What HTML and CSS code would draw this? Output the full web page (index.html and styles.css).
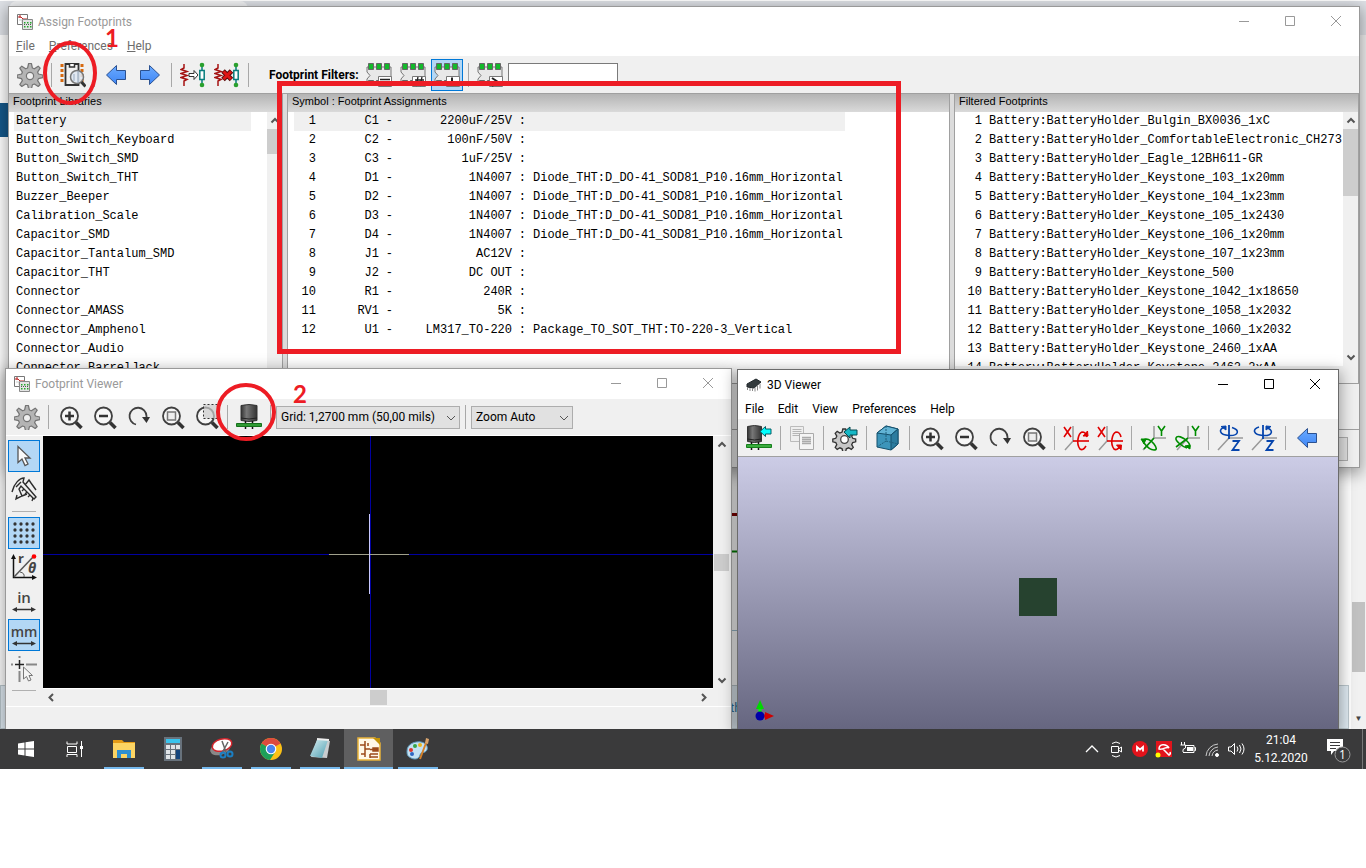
FILE: index.html
```
<!DOCTYPE html>
<html lang="en">
  <head>
    <meta charset="UTF-8" />
    <meta name="viewport" content="width=device-width, initial-scale=1.0" />
    <title>Assign Footprints</title>
    <link rel="stylesheet" href="styles.css">
  </head>
  <body>
    <svg class="sprite" aria-hidden="true">
      <defs>
        <linearGradient id="blueArrow" x1="0" y1="0" x2="0" y2="1">
          <stop offset="0" stop-color="#6aaaff" /><stop offset="1" stop-color="#3f86f5" />
        </linearGradient>
        <linearGradient id="can" x1="0" y1="0" x2="1" y2="0">
          <stop offset="0" stop-color="#333" /><stop offset="0.35" stop-color="#777" /><stop offset="1" stop-color="#333" />
        </linearGradient>
        <linearGradient id="pad" x1="0" y1="0" x2="1" y2="1">
          <stop offset="0" stop-color="#d7eef2" /><stop offset="1" stop-color="#4c9db0" />
        </linearGradient>
      </defs>
      <symbol id="app" viewBox="0 0 16 16">
        <path d="M0.5 0.5h10v10h-10z" fill="#fff" stroke="#777" />
        <path d="M1 3h3l2 2h4M3 1v3" stroke="#b22" fill="none" />
        <path d="M2 6h3v3" stroke="#ccc" fill="none" />
        <path d="M5.500 5.500h10v10h-10z" fill="#e4e4e4" stroke="#888" />
        <path d="M7 8h1.500v1.500H7zM10 8h1.500v1.500H10zM13 8h1.500v1.500H13zM7 12h1.500v1.500H7zM10 12h1.500v1.500H10zM13 12h1.500v1.500H13z" fill="#26a52c" />
        <path d="M7 10.500h7" stroke="#555" stroke-dasharray="1 1" />
      </symbol>
      <symbol id="chip3d" viewBox="0 0 16 16">
        <path d="M1 7l9-5 5 3-7 6-7-1z" fill="#333a3d" stroke="#20272a" />
        <path d="M1.500 10v3M4 11v3M6.500 11v3M9 10.500v4M11.500 8.500v5M14 6.500v5" stroke="#888" fill="none" />
      </symbol>
      <symbol id="gear" viewBox="0 0 26 26">
        <path d="M11.600 1.500h2.800l1 4.500 2 .8 3.800-2.600 2 2-2.600 3.900.8 1.900 4.400 1v2.700l-4.400 1-.8 2 2.600 3.800-2 2-3.800-2.500-2 .8-1 4.200h-2.800l-1-4.200-2-.8-3.800 2.500-2-2 2.600-3.800-.8-2-4.400-1V13l4.400-1 .8-1.900-2.600-3.900 2-2 3.800 2.600 2-.8z" fill="#b4b4b4" stroke="#747474" stroke-width="1.200" stroke-linejoin="round" />
        <circle cx="13" cy="14" r="3.600" fill="#efefef" stroke="#747474" stroke-width="1.200" />
      </symbol>
      <symbol id="gearArrow" viewBox="0 0 26 26">
        <path d="M10.800 4h2.800l.7 3 2.300 1 2.700-1.600 2 2-1.600 2.700 1 2.200 3 .700v2.800l-3 .700-1 2.200 1.600 2.700-2 2-2.700-1.600-2.300 1-.7 3h-2.800l-.7-3-2.200-1-2.700 1.600-2-2 1.600-2.700-1-2.200-3-.7V14l3-.7 1-2.200-1.600-2.700 2-2L7.900 8l2.200-1z" fill="#c7c7c7" stroke="#333" stroke-width="1.300" />
        <circle cx="12.500" cy="14.500" r="3.800" fill="#fff" stroke="#444" stroke-width="1.300" />
        <path d="M12 7l6-5v3h7v5h-7v3z" fill="#16b8c6" stroke="#064b52" />
      </symbol>
      <symbol id="fpView" viewBox="0 0 26 26">
        <path d="M2 2v20M22 2v20" stroke="#d6690f" stroke-width="3" stroke-dasharray="3 2" />
        <path d="M5.500 2h13v21h-13z" fill="#f2f2f2" stroke="#333" stroke-width="1.800" />
        <path d="M9.500 2v3h5V2" fill="#fff" stroke="#333" stroke-width="1.500" />
        <circle cx="17" cy="15" r="6.500" fill="#dfe8f2" fill-opacity="0.850" stroke="#777" stroke-width="1.500" />
        <path d="M18 9v12M14 12v7" stroke="#9aabc0" />
        <path d="M21.500 20l4 4.500" stroke="#333" stroke-width="3" />
      </symbol>
      <symbol id="arrowL" viewBox="0 0 26 26">
        <path d="M3.500 13l10-9.500v5h9v9h-9v5z" fill="url(#blueArrow)" stroke="#2b5191" stroke-linejoin="round" />
      </symbol>
      <symbol id="arrowR" viewBox="0 0 26 26">
        <path d="M22.500 13l-10-9.500v5h-9v9h9v5z" fill="url(#blueArrow)" stroke="#2b5191" stroke-linejoin="round" />
      </symbol>
      <symbol id="resistor" viewBox="0 0 26 26">
        <path d="M4 2v4l-3 1.500 6 2-6 2 6 2-6 2 6 2-3 1.500V24" fill="none" stroke="#a51212" stroke-width="1.500" />
        <path d="M22 4v18" stroke="#087d7d" stroke-width="1.500" />
        <path d="M19.800 8.500h4.400v9h-4.400z" fill="#fff" stroke="#087d7d" stroke-width="1.500" />
        <circle cx="22" cy="3" r="2.300" fill="#2aa02e" /><circle cx="22" cy="23" r="2.300" fill="#2aa02e" />
      </symbol>
      <symbol id="assign" viewBox="0 0 26 26">
        <use href="#resistor" />
        <path d="M9 11.500h5v-3l4 4.500-4 4.500v-3H9z" fill="#fff" stroke="#333" />
      </symbol>
      <symbol id="unassign" viewBox="0 0 26 26">
        <use href="#resistor" />
        <path d="M9 9l8.500 8.500M17.500 9L9 17.500" stroke="#5b0b0b" stroke-width="5" />
        <path d="M9.500 9.500l7.500 7.500M17 9.500L9.500 17" stroke="#e01414" stroke-width="3" />
      </symbol>
      <symbol id="filter" viewBox="0 0 26 26">
        <path d="M1 5h24v16H1v-4l3-3.500L1 10z" fill="#e8e8e8" stroke="#777" />
        <path d="M2.500 1.500h5v6h-5zM10.500 1.500h5v6h-5zM18.500 1.500h5v6h-5zM2.500 18.500h5v5h-5zM10.500 18.500h5v5h-5z" fill="#13b92a" stroke="#666" />
        <path d="M12.500 14.500h13v10h-13z" fill="#fff" stroke="#777" />
      </symbol>
      <symbol id="filterKey" viewBox="0 0 26 26"><use href="#filter" /><path d="M14 17.500h10M14 20.500h6" stroke="#222" stroke-width="1.500" /></symbol>
      <symbol id="filterPin" viewBox="0 0 26 26"><use href="#filter" /><path d="M18 15l-2 9M22 15l-2 9M15 18h9M14 21h9" stroke="#222" stroke-width="1.300" /></symbol>
      <symbol id="filterLib" viewBox="0 0 26 26"><use href="#filter" /><path d="M18 15.500V22h5" stroke="#222" stroke-width="2" fill="none" /></symbol>
      <symbol id="filterText" viewBox="0 0 26 26"><use href="#filter" /><path d="M15 16l6 4-6 4" stroke="#222" stroke-width="2" fill="none" /></symbol>
      <symbol id="lens" viewBox="0 0 26 26">
        <circle cx="12.500" cy="12" r="8.500" fill="#f6f6f6" stroke="#404040" stroke-width="1.800" />
        <path d="M19 18.500l5.500 5.500" stroke="#333" stroke-width="3.500" />
      </symbol>
      <symbol id="zoomIn" viewBox="0 0 26 26"><use href="#lens" /><path d="M8 12h9M12.500 7.500v9" stroke="#333" stroke-width="2.500" /></symbol>
      <symbol id="zoomOut" viewBox="0 0 26 26"><use href="#lens" /><path d="M8 12h9" stroke="#333" stroke-width="2.500" /></symbol>
      <symbol id="zoomFit" viewBox="0 0 26 26"><use href="#lens" /><path d="M8.500 8h8v8h-8z" fill="#eee" stroke="#777" stroke-width="1.500" /></symbol>
      <symbol id="zoomArea" viewBox="0 0 26 26">
        <use href="#lens" />
        <path d="M10.500 0.500h14v14h-14z" fill="#ccc" fill-opacity="0.700" stroke="#333" stroke-dasharray="2 2" />
      </symbol>
      <symbol id="redraw" viewBox="0 0 26 26">
        <path d="M11 20.500a8.500 8.500 0 1 1 10.500-8.500v2" fill="none" stroke="#404040" stroke-width="1.800" />
        <path d="M17 13h8l-3.500 6z" fill="#333" />
      </symbol>
      <symbol id="cap" viewBox="0 0 26 26">
        <path d="M5 1.500q8-2 16 0v15q-8 2-16 0z" fill="url(#can)" stroke="#333" />
        <path d="M5 14q8 2 16 0" stroke="#222" fill="none" />
        <path d="M9.500 17v8M16.500 17v8" stroke="#111" stroke-width="1.500" />
        <path d="M0.500 19.500h25v3h-25z" fill="#2f9b33" stroke="#16701c" />
      </symbol>
      <symbol id="capArrow" viewBox="0 0 26 26">
        <path d="M1.500 1.500q7-2 14 0v15q-7 2-14 0z" fill="url(#can)" stroke="#333" />
        <path d="M1.500 14q7 2 14 0" stroke="#222" fill="none" />
        <path d="M5.500 17v8M12.500 17v8" stroke="#111" stroke-width="1.500" />
        <path d="M0.500 19.500h25v3h-25z" fill="#3aac3e" stroke="#16801c" />
        <path d="M14 6.500l5.500-5V4h5.500v5h-5.500v2.500z" fill="#0ff" stroke="#075d64" />
      </symbol>
      <symbol id="copy" viewBox="0 0 26 26">
        <path d="M1.500 1.500h13v15h-13z" fill="#eee" stroke="#bbb" />
        <path d="M3.500 4.500h9M3.500 6.500h9M3.500 8.500h9M3.500 10.500h7" stroke="#b5b5b5" />
        <path d="M10.500 8.500h14v16h-14z" fill="#f4f4f4" stroke="#aaa" />
        <path d="M13 12.500h9M13 14.500h9M13 16.500h9M13 18.500h9" stroke="#aaa" stroke-width="1.300" />
      </symbol>
      <symbol id="cube" viewBox="0 0 26 26">
        <path d="M2 8l9-7 12 3v15l-7 6-14-3z" fill="#3d95ba" stroke="#14506c" />
        <path d="M2 8l14 2 7-6-12-3z" fill="#62b4d5" stroke="#14506c" />
        <path d="M16 10l7-6v15l-7 6z" fill="#2c7c9f" stroke="#14506c" />
        <path d="M11 1v15l-9 6M11 16l12 3" stroke="#20607c" stroke-dasharray="2 1" fill="none" />
      </symbol>
      <symbol id="rotX" viewBox="0 0 26 26">
        <path d="M10 1v15l-8 9" stroke="#999" stroke-width="1.500" fill="none" />
        <path d="M1 2l7 10M8 2L1 12" stroke="#e00000" stroke-width="1.600" />
        <path d="M10 16h16" stroke="#e00000" stroke-width="1.600" />
        <path d="M23 21q-3 5-6 3-3-4-2-10 1-6 4-7 4 0 5 5" stroke="#e00000" stroke-width="1.600" fill="none" />
      </symbol>
      <symbol id="rotXcw" viewBox="0 0 26 26"><use href="#rotX" /><path d="M20 11h5l-.5-5z" fill="#e00000" stroke="#e00000" /></symbol>
      <symbol id="rotXccw" viewBox="0 0 26 26"><use href="#rotX" /><path d="M19.500 20h5l-.5 5z" fill="#e00000" stroke="#e00000" /></symbol>
      <symbol id="rotY" viewBox="0 0 26 26">
        <path d="M14 1v12h12M14 13L3 25" stroke="#999" stroke-width="1.500" fill="none" />
        <path d="M18 1l3.500 5L25 1M21.500 6v5" stroke="#008c00" stroke-width="1.600" fill="none" />
      </symbol>
      <symbol id="rotYcw" viewBox="0 0 26 26">
        <use href="#rotY" />
        <path d="M3 16c3-4 8-1 11 3s3 6 0 6-7-3-10-7M4 24L14 13" stroke="#008c00" stroke-width="1.600" fill="none" />
        <path d="M1 14h5l-2 5z" fill="#008c00" stroke="#008c00" />
      </symbol>
      <symbol id="rotYccw" viewBox="0 0 26 26">
        <use href="#rotY" />
        <path d="M13 23c-4-1-12-7-11-10s7-1 11 3 3 6 2 7M2 22L14 13" stroke="#008c00" stroke-width="1.600" fill="none" />
        <path d="M11 21l5-1v4z" fill="#008c00" stroke="#008c00" />
      </symbol>
      <symbol id="rotZ" viewBox="0 0 26 26">
        <path d="M12 13h14M12 13L1 25" stroke="#999" stroke-width="1.500" fill="none" />
        <path d="M12 0v14M15.500 16H22L15.500 25H22.500" stroke="#0645ad" stroke-width="1.800" fill="none" />
        <path d="M8 2C1 4 2 10 12 10.500S23 5 15 2.500" stroke="#0645ad" stroke-width="1.600" fill="none" />
      </symbol>
      <symbol id="rotZcw" viewBox="0 0 26 26"><use href="#rotZ" /><path d="M4 1.500l5-.5v4z" fill="#0645ad" stroke="#0645ad" /></symbol>
      <symbol id="rotZccw" viewBox="0 0 26 26"><use href="#rotZ" /><path d="M20 1.500l-5-.5v4z" fill="#0645ad" stroke="#0645ad" /></symbol>
      <symbol id="cursor" viewBox="0 0 26 26">
        <path d="M7 3.500v16l4-3.500 3 6.500 3-1.500-3-6h5z" fill="#fafafa" stroke="#555" stroke-width="1.300" />
      </symbol>
      <symbol id="caliper" viewBox="0 0 26 26">
        <path d="M1 15C3 6 9 1 13 1l-1 4 13 15-2 2L10 9l-2 3 3 7-6 3 1-4M5 10l5-5M14 8l4-5 2 3 5 7M11 19l5-2" fill="none" stroke="#2c2c2c" stroke-width="1.400" />
        <path d="M13 12l-2 2M16 15l-2 2M19 18l-2 2M22 21l-1 3" stroke="#2c2c2c" stroke-width="1.300" />
      </symbol>
      <symbol id="grid" viewBox="0 0 26 26">
        <path d="M4 4h19M4 10h19M4 16h19M4 22h19" stroke="#333" stroke-width="3.300" stroke-linecap="round" stroke-dasharray="0 6" />
      </symbol>
      <symbol id="polar" viewBox="0 0 26 26">
        <path d="M2.500 4v19.500H22" stroke="#111" stroke-width="1.500" fill="none" />
        <path d="M0 5l2.500-5L5 5zM21 21l5 2.500-5 2.500z" fill="#111" />
        <path d="M3 23L22 3" stroke="#555" stroke-width="1.500" />
        <path d="M9 18q5 1 4 5" stroke="#555" fill="none" />
        <circle cx="23" cy="2.500" r="2.300" fill="#f00" />
        <text x="7" y="9" font-family="Open Sans" font-size="13" font-weight="700" fill="#444">r</text>
        <text x="17" y="19" font-family="Open Sans" font-size="14" font-weight="700" font-style="italic" fill="#444">θ</text>
      </symbol>
      <symbol id="span" viewBox="0 0 26 26">
        <path d="M4 21.500h18" stroke="#333" stroke-width="1.500" />
        <path d="M1 21.500l5-2.500v5zM25 21.500L20 19v5z" fill="#333" />
      </symbol>
      <symbol id="inch" viewBox="0 0 26 26">
        <use href="#span" />
        <text x="13" y="15" text-anchor="middle" font-family="Open Sans" font-size="15" font-weight="600" fill="#444">in</text>
      </symbol>
      <symbol id="mm" viewBox="0 0 26 26">
        <use href="#span" />
        <text x="13" y="15" text-anchor="middle" font-family="Open Sans" font-size="14" font-weight="600" fill="#444">mm</text>
      </symbol>
      <symbol id="cross" viewBox="0 0 26 26">
        <path d="M8.500 0v2M0 8.500h2M15 8.500h11M8.500 15v11" stroke="#888" stroke-width="2" />
        <path d="M8.500 4v9M4 8.500h9" stroke="#222" stroke-width="1.500" />
        <path d="M12.500 11v12l3-2.500 2 4.500 2.500-1-2-4.500h3.500z" fill="#f5f5f5" stroke="#777" />
      </symbol>
      <symbol id="min" viewBox="0 0 12 12"><path d="M1 5.500h10" stroke="currentColor" /></symbol>
      <symbol id="max" viewBox="0 0 12 12"><path d="M1.500 0.500h9v9h-9z" stroke="currentColor" fill="none" /></symbol>
      <symbol id="close" viewBox="0 0 12 12"><path d="M1 0l10 10M11 0L1 10" stroke="currentColor" /></symbol>
      <symbol id="up" viewBox="0 0 10 10"><path d="M1.500 7L5 3.500 8.500 7" fill="none" stroke="#555" stroke-width="2" /></symbol>
      <symbol id="down" viewBox="0 0 10 10"><path d="M1.500 3L5 6.500 8.500 3" fill="none" stroke="#555" stroke-width="2" /></symbol>
      <symbol id="left" viewBox="0 0 10 10"><path d="M7 1.500L3.500 5 7 8.500" fill="none" stroke="#555" stroke-width="2" /></symbol>
      <symbol id="right" viewBox="0 0 10 10"><path d="M3 1.500L6.500 5 3 8.500" fill="none" stroke="#555" stroke-width="2" /></symbol>
      <symbol id="chevron" viewBox="0 0 10 10"><path d="M1 3l4 4 4-4" fill="none" stroke="#555" /></symbol>
    </svg>

    <main class="desktop">
      <div class="browser">
        <div class="tab-strip"><div class="tab"></div></div>
        <div class="page">
          <div class="page-band"></div>
          <svg class="page-drawing" aria-hidden="true">
            <path d="M600 377.500h140" stroke="#800000" stroke-width="3" />
            <path d="M600 414.500h140" stroke="#008000" stroke-width="2" />
            <path d="M600 493.500h140" stroke="#9bbdd0" />
          </svg>
          <div class="page-note">th</div>
        </div>
        <div class="page-scroll"><div class="page-thumb"></div><span>▼</span></div>
      </div>

      <section class="window assign inactive">
        <header class="title-bar">
          <svg class="app-icon"><use href="#app" /></svg>
          <h1>Assign Footprints</h1>
          <button aria-label="Minimize"><svg><use href="#min" /></svg></button>
          <button aria-label="Maximize"><svg><use href="#max" /></svg></button>
          <button aria-label="Close"><svg><use href="#close" /></svg></button>
        </header>
        <nav class="menu-bar">
          <button><u>F</u>ile</button>
          <button><u>P</u>references</button>
          <button><u>H</u>elp</button>
        </nav>
        <div class="toolbar">
          <button aria-label="Settings"><svg><use href="#gear" /></svg></button>
          <i class="sep"></i>
          <button aria-label="View footprint"><svg><use href="#fpView" /></svg></button>
          <i class="sep"></i>
          <button aria-label="Previous"><svg><use href="#arrowL" /></svg></button>
          <button aria-label="Next"><svg><use href="#arrowR" /></svg></button>
          <i class="sep"></i>
          <button aria-label="Auto assign"><svg><use href="#assign" /></svg></button>
          <button aria-label="Delete assignments"><svg><use href="#unassign" /></svg></button>
          <i class="sep"></i>
          <label class="filter-label" for="filterInput">Footprint Filters:</label>
          <button aria-label="Filter by keyword"><svg><use href="#filterKey" /></svg></button>
          <button aria-label="Filter by pin count"><svg><use href="#filterPin" /></svg></button>
          <button class="on" aria-label="Filter by library"><svg><use href="#filterLib" /></svg></button>
          <i class="sep"></i>
          <button aria-label="Filter by text"><svg><use href="#filterText" /></svg></button>
          <input id="filterInput" class="filter-input" type="text">
        </div>
        <div class="panels">
          <section class="panel libraries">
            <h2>Footprint Libraries</h2>
            <div class="panel-body">
              <ul class="rows">
                <li class="selected">Battery</li>
                <li>Button_Switch_Keyboard</li>
                <li>Button_Switch_SMD</li>
                <li>Button_Switch_THT</li>
                <li>Buzzer_Beeper</li>
                <li>Calibration_Scale</li>
                <li>Capacitor_SMD</li>
                <li>Capacitor_Tantalum_SMD</li>
                <li>Capacitor_THT</li>
                <li>Connector</li>
                <li>Connector_AMASS</li>
                <li>Connector_Amphenol</li>
                <li>Connector_Audio</li>
                <li>Connector_BarrelJack</li>
              </ul>
              <div class="v-scroll"><svg><use href="#up" /></svg><div class="thumb small"></div></div>
            </div>
          </section>
          <section class="panel assignments">
            <h2>Symbol : Footprint Assignments</h2>
            <div class="panel-body">
              <table>
                <tr class="selected"><td>1</td><td>C1</td><td>-</td><td>2200uF/25V</td><td>:</td><td></td></tr>
                <tr><td>2</td><td>C2</td><td>-</td><td>100nF/50V</td><td>:</td><td></td></tr>
                <tr><td>3</td><td>C3</td><td>-</td><td>1uF/25V</td><td>:</td><td></td></tr>
                <tr><td>4</td><td>D1</td><td>-</td><td>1N4007</td><td>:</td><td>Diode_THT:D_DO-41_SOD81_P10.16mm_Horizontal</td></tr>
                <tr><td>5</td><td>D2</td><td>-</td><td>1N4007</td><td>:</td><td>Diode_THT:D_DO-41_SOD81_P10.16mm_Horizontal</td></tr>
                <tr><td>6</td><td>D3</td><td>-</td><td>1N4007</td><td>:</td><td>Diode_THT:D_DO-41_SOD81_P10.16mm_Horizontal</td></tr>
                <tr><td>7</td><td>D4</td><td>-</td><td>1N4007</td><td>:</td><td>Diode_THT:D_DO-41_SOD81_P10.16mm_Horizontal</td></tr>
                <tr><td>8</td><td>J1</td><td>-</td><td>AC12V</td><td>:</td><td></td></tr>
                <tr><td>9</td><td>J2</td><td>-</td><td>DC OUT</td><td>:</td><td></td></tr>
                <tr><td>10</td><td>R1</td><td>-</td><td>240R</td><td>:</td><td></td></tr>
                <tr><td>11</td><td>RV1</td><td>-</td><td>5K</td><td>:</td><td></td></tr>
                <tr><td>12</td><td>U1</td><td>-</td><td>LM317_TO-220</td><td>:</td><td>Package_TO_SOT_THT:TO-220-3_Vertical</td></tr>
              </table>
            </div>
          </section>
          <section class="panel filtered">
            <h2>Filtered Footprints</h2>
            <div class="panel-body">
              <ul class="rows numbered">
                <li><span>1</span>Battery:BatteryHolder_Bulgin_BX0036_1xC</li>
                <li><span>2</span>Battery:BatteryHolder_ComfortableElectronic_CH273-2450_1x2450</li>
                <li><span>3</span>Battery:BatteryHolder_Eagle_12BH611-GR</li>
                <li><span>4</span>Battery:BatteryHolder_Keystone_103_1x20mm</li>
                <li><span>5</span>Battery:BatteryHolder_Keystone_104_1x23mm</li>
                <li><span>6</span>Battery:BatteryHolder_Keystone_105_1x2430</li>
                <li><span>7</span>Battery:BatteryHolder_Keystone_106_1x20mm</li>
                <li><span>8</span>Battery:BatteryHolder_Keystone_107_1x23mm</li>
                <li><span>9</span>Battery:BatteryHolder_Keystone_500</li>
                <li><span>10</span>Battery:BatteryHolder_Keystone_1042_1x18650</li>
                <li><span>11</span>Battery:BatteryHolder_Keystone_1058_1x2032</li>
                <li><span>12</span>Battery:BatteryHolder_Keystone_1060_1x2032</li>
                <li><span>13</span>Battery:BatteryHolder_Keystone_2460_1xAA</li>
                <li><span>14</span>Battery:BatteryHolder_Keystone_2462_2xAA</li>
              </ul>
              <div class="v-scroll"><svg><use href="#up" /></svg><div class="thumb"></div><svg class="end"><use href="#down" /></svg></div>
            </div>
            <div class="h-track"></div>
          </section>
        </div>
        <div class="status"></div>
        <footer class="dialog-buttons"><button aria-label="Cancel"></button></footer>
      </section>

      <section class="window viewer inactive">
        <header class="title-bar">
          <svg class="app-icon"><use href="#app" /></svg>
          <h1>Footprint Viewer</h1>
          <button aria-label="Minimize"><svg><use href="#min" /></svg></button>
          <button aria-label="Maximize"><svg><use href="#max" /></svg></button>
          <button aria-label="Close"><svg><use href="#close" /></svg></button>
        </header>
        <div class="toolbar">
          <button aria-label="Settings"><svg><use href="#gear" /></svg></button>
          <i class="sep"></i>
          <button aria-label="Zoom in"><svg><use href="#zoomIn" /></svg></button>
          <button aria-label="Zoom out"><svg><use href="#zoomOut" /></svg></button>
          <button aria-label="Redraw"><svg><use href="#redraw" /></svg></button>
          <button aria-label="Zoom to fit"><svg><use href="#zoomFit" /></svg></button>
          <button aria-label="Zoom to area"><svg><use href="#zoomArea" /></svg></button>
          <i class="sep"></i>
          <button aria-label="3D viewer"><svg><use href="#cap" /></svg></button>
          <i class="sep"></i>
          <div class="choice grid-choice">
            <select aria-label="Grid"><option>Grid: 1,2700 mm (50,00 mils)</option></select>
            <svg><use href="#chevron" /></svg>
          </div>
          <i class="sep"></i>
          <div class="choice zoom-choice">
            <select aria-label="Zoom"><option>Zoom Auto</option></select>
            <svg><use href="#chevron" /></svg>
          </div>
        </div>
        <div class="viewer-body">
          <div class="side-tools">
            <button class="on" aria-label="Select"><svg><use href="#cursor" /></svg></button>
            <button aria-label="Measure"><svg><use href="#caliper" /></svg></button>
            <i class="sep"></i>
            <button class="on" aria-label="Grid"><svg><use href="#grid" /></svg></button>
            <button aria-label="Polar coordinates"><svg><use href="#polar" /></svg></button>
            <button aria-label="Inches"><svg><use href="#inch" /></svg></button>
            <button class="on" aria-label="Millimeters"><svg><use href="#mm" /></svg></button>
            <button aria-label="Full crosshair"><svg><use href="#cross" /></svg></button>
            <i class="sep"></i>
          </div>
          <div class="canvas-area">
            <svg class="canvas" aria-label="Footprint canvas">
              <path d="M327.500 0v600M0 118.500h2000" stroke="#0000a0" />
              <path d="M286 118.500h80" stroke="#a0a08c" />
              <path d="M326.500 78v80" stroke="#c8c8ff" />
            </svg>
            <div class="v-scroll"><svg><use href="#up" /></svg><div class="thumb"></div><svg class="end"><use href="#down" /></svg></div>
            <div class="h-scroll"><svg><use href="#left" /></svg><div class="thumb"></div><svg class="end"><use href="#right" /></svg></div>
          </div>
        </div>
        <div class="viewer-status"></div>
      </section>

      <section class="window viewer3d">
        <header class="title-bar">
          <svg class="app-icon"><use href="#chip3d" /></svg>
          <h1>3D Viewer</h1>
          <button aria-label="Minimize"><svg><use href="#min" /></svg></button>
          <button aria-label="Maximize"><svg><use href="#max" /></svg></button>
          <button aria-label="Close"><svg><use href="#close" /></svg></button>
        </header>
        <nav class="menu-bar">
          <button>File</button>
          <button>Edit</button>
          <button>View</button>
          <button>Preferences</button>
          <button>Help</button>
        </nav>
        <div class="toolbar">
          <button aria-label="Reload board"><svg><use href="#capArrow" /></svg></button>
          <i class="sep"></i>
          <button aria-label="Copy image"><svg><use href="#copy" /></svg></button>
          <i class="sep"></i>
          <button aria-label="Render options"><svg><use href="#gearArrow" /></svg></button>
          <i class="sep"></i>
          <button aria-label="Raytracing"><svg><use href="#cube" /></svg></button>
          <i class="sep"></i>
          <button aria-label="Zoom in"><svg><use href="#zoomIn" /></svg></button>
          <button aria-label="Zoom out"><svg><use href="#zoomOut" /></svg></button>
          <button aria-label="Redraw"><svg><use href="#redraw" /></svg></button>
          <button aria-label="Zoom to fit"><svg><use href="#zoomFit" /></svg></button>
          <i class="sep"></i>
          <button aria-label="Rotate X clockwise"><svg><use href="#rotXcw" /></svg></button>
          <button aria-label="Rotate X counterclockwise"><svg><use href="#rotXccw" /></svg></button>
          <i class="sep"></i>
          <button aria-label="Rotate Y clockwise"><svg><use href="#rotYcw" /></svg></button>
          <button aria-label="Rotate Y counterclockwise"><svg><use href="#rotYccw" /></svg></button>
          <i class="sep"></i>
          <button aria-label="Rotate Z clockwise"><svg><use href="#rotZcw" /></svg></button>
          <button aria-label="Rotate Z counterclockwise"><svg><use href="#rotZccw" /></svg></button>
          <i class="sep"></i>
          <button aria-label="Move left"><svg><use href="#arrowL" /></svg></button>
        </div>
        <div class="scene">
          <div class="board"></div>
          <svg class="axes" viewBox="0 0 24 24" aria-hidden="true">
            <path d="M7 17h9" stroke="#f00" stroke-width="3" /><path d="M13 13l9 4-9 4z" fill="#d00000" />
            <path d="M8 17V8" stroke="#0f0" stroke-width="3" /><path d="M4 10l4-9 4 9z" fill="#00d800" />
            <circle cx="8" cy="17" r="4.500" fill="#0000a8" />
          </svg>
        </div>
      </section>

      <svg class="marks" aria-hidden="true">
        <rect x="279.500" y="83.500" width="619" height="268" stroke-width="5" />
        <ellipse cx="70" cy="73" rx="25" ry="30" stroke-width="4" />
        <ellipse cx="246" cy="412" rx="28" ry="27" stroke-width="4" />
        <text x="105" y="47">1</text>
        <text x="293" y="403">2</text>
      </svg>
    </main>

    <footer class="taskbar">
      <button class="task" aria-label="Start">
        <svg viewBox="0 0 24 24"><path d="M4 6.500l6.500-1v6H4zM11.500 5.300L20 4v7.500h-8.500zM4 12.500h6.500v6l-6.500-1zM11.500 12.500H20V20l-8.500-1.300z" fill="#fff" /></svg>
      </button>
      <button class="task" aria-label="Task view">
        <svg viewBox="0 0 24 24" fill="none" stroke="#fff"><path d="M4 4.500V7h10V4.500M4 20v-2.500h10V20M4.500 9.500h9v6h-9zM18.500 4v16" /><path d="M17 9h3v3h-3z" fill="#fff" stroke="none" /></svg>
      </button>
      <button class="task open" aria-label="File Explorer">
        <svg viewBox="0 0 24 24"><path d="M1 3h9l2 2h11v6H1z" fill="#e49b17" /><path d="M1 6h22v15H1z" fill="#fcd463" /><path d="M5 13h14v8h-4v-4H9v4H5z" fill="#2f8fd0" /></svg>
      </button>
      <button class="task" aria-label="Calculator">
        <svg viewBox="0 0 24 24"><path d="M3 0h18v24H3z" fill="#68727c" /><path d="M5 2h14v4H5z" fill="#39c4ee" /><path d="M5 8h4v4H5zM10 8h4v4h-4zM15 8h4v4h-4zM5 13h4v4H5zM10 13h4v4h-4zM5 18h4v4H5zM10 18h4v4h-4z" fill="#e0e4e8" /><path d="M15 13h4v9h-4z" fill="#14447c" /></svg>
      </button>
      <button class="task open" aria-label="Snipping Tool">
        <svg viewBox="0 0 24 24"><ellipse cx="10" cy="12" rx="10" ry="6" fill="#888" transform="rotate(-15 10 12)" /><ellipse cx="12" cy="8" rx="10" ry="6" fill="#fff" stroke="#d2252c" stroke-width="1.500" transform="rotate(-15 12 8)" /><path d="M12 4l4 11M18 5L12 16" stroke="#666" stroke-width="1.500" /><circle cx="13" cy="18" r="2.500" fill="none" stroke="#1b7ec2" stroke-width="2" /><circle cx="20" cy="17" r="2.500" fill="none" stroke="#1b7ec2" stroke-width="2" /></svg>
      </button>
      <button class="task open" aria-label="Chrome">
        <svg viewBox="0 0 24 24"><circle cx="12" cy="12" r="11" fill="#fbc116" /><path d="M12 12L2.500 6.500a11 11 0 0 1 19 0z" fill="#dd4b3e" /><path d="M12 12L2.500 6.500A11 11 0 0 0 11 23l5.500-8.500z" fill="#1da05a" /><path d="M12 7h10a11 11 0 0 0-.500-.5H12z" fill="#dd4b3e" /><circle cx="12" cy="12" r="5.300" fill="#fff" /><circle cx="12" cy="12" r="4.200" fill="#4a85ee" /></svg>
      </button>
      <button class="task open" aria-label="Notepad">
        <svg viewBox="0 0 24 24"><path d="M9 3l13 1-3 17L3 20z" fill="#c9cdd0" /><path d="M9 3l11 0-6 18L2 19z" fill="url(#pad)" /><path d="M9 2l12 1" stroke="#eee" stroke-width="2" /></svg>
      </button>
      <button class="task open active" aria-label="KiCad">
        <svg viewBox="0 0 24 24"><path d="M1 1h17l5 5v17H1z" fill="#fff8e8" stroke="#e8b33a" stroke-width="1.500" /><path d="M16 1h7v7z" fill="#c59408" /><path d="M3 8h5M8 4v16M8 12h5M4 17h4M11 6v3M16 11h5v3h-5zM13 12.500h8M13 17h8M13 20h8M13 17v4" stroke="#9c4a1a" stroke-width="1.500" fill="none" /></svg>
      </button>
      <button class="task open" aria-label="Paint">
        <svg viewBox="0 0 24 24"><path d="M1 14C1 7 9 4 15 5c7 1 8 8 4 10-3 1-4 0-5 3-1 4-5 5-9 3s-4-4-4-7z" fill="#c3e1f3" stroke="#5c99bd" /><circle cx="5" cy="13" r="2" fill="#d9372c" /><circle cx="9" cy="9" r="2" fill="#37a446" /><circle cx="14" cy="8" r="2" fill="#e9b520" /><circle cx="6" cy="17" r="2" fill="#2f66c2" /><path d="M14 22l6-16" stroke="#d58028" stroke-width="2" /><path d="M19 6l1-5 3 1-1 5z" fill="#d8a46e" /></svg>
      </button>
      <div class="tray">
        <svg viewBox="0 0 24 24"><path d="M6 15l6-6 6 6" fill="none" stroke="#fff" stroke-width="1.300" /></svg>
        <svg viewBox="0 0 24 24" fill="none" stroke="#fff"><path d="M7.500 9.500h7v6h-7zM14.500 12l3-2v5l-3-2M8 6.500q4-3 8 0M8 18.500q4 3 8 0" /></svg>
        <svg viewBox="0 0 24 24"><circle cx="12" cy="12" r="8" fill="#e3131b" /><path d="M9 14.500V10l3 2.500 3-2.500v4.500" fill="none" stroke="#fff" stroke-width="1.800" /></svg>
        <svg viewBox="0 0 24 24"><path d="M4 4h16v16H4z" fill="#e2141c" /><path d="M7 12c0-5 7-6 10-1-3-2-5 2-10 1zM11 12l6 6q2-1 1-3" fill="none" stroke="#fff" stroke-width="1.500" /><circle cx="6" cy="18" r="2.500" fill="#ff0" /></svg>
        <svg viewBox="0 0 24 24" fill="none" stroke="#fff"><path d="M5.500 5v3M8.500 5v3M4.500 8h5v3l-2.500 1.500V15" /><path d="M9 8.500h9v7H7M18.500 10.500h1v3h-1" /><path d="M11 10h6v4h-6z" fill="#fff" stroke="none" /></svg>
        <svg viewBox="0 0 24 24" fill="none" stroke="#ccc"><path d="M6 19A13 13 0 0 1 18 7M9 19a10 10 0 0 1 9-9M12 19a7 7 0 0 1 6-6" /><circle cx="17" cy="18" r="1.500" fill="#fff" stroke="#fff" /></svg>
        <svg viewBox="0 0 24 24" fill="none" stroke="#fff"><path d="M4.500 10H7l3.500-3.500v11L7 14H4.500zM13 9.500q2 2.500 0 5M15.500 8q3 4 0 8M18 6.500q4 5.500 0 11" /></svg>
      </div>
      <div class="clock"><time>21:04</time><time>5.12.2020</time></div>
      <button class="notices" aria-label="1 notification">
        <svg viewBox="0 0 28 28"><path d="M3 4h16v12h-9l-3 4v-4H3z" fill="#fff" /><path d="M6 7.500h10M6 10.500h10M6 13.500h6" stroke="#3a3a3b" /><circle cx="18.500" cy="19.500" r="7.500" fill="#3a3a3b" stroke="#999" /><text x="18.500" y="24" text-anchor="middle" font-family="Open Sans" font-size="12" fill="#fff">1</text></svg>
      </button>
      <i class="show-desktop"></i>
    </footer>
  </body>
</html>
```
FILE: styles.css
```
* {
  box-sizing: border-box;
}
body {
  margin: 0;
  padding-bottom: 99px;
  min-height: 100vh;
  display: flex;
  flex-direction: column;
  background: #fff;
  font-family: Roboto, "Open Sans", sans-serif;
  font-size: 12px;
  color: #000;
}
button {
  padding: 0;
  border: none;
  background: none;
  font: inherit;
  color: inherit;
}
.sprite {
  position: absolute;
  width: 0;
  height: 0;
}
.desktop {
  position: relative;
  flex: 1;
  display: flex;
  overflow: hidden;
}

/* browser page behind the windows */
.browser {
  flex: 1;
  display: grid;
  grid-template-columns: 1fr 15px;
  grid-template-rows: 34px 1fr;
  border-top: 1px solid #fff;
}
.tab-strip {
  grid-column: 1 / 3;
  background: #dee1e6;
  padding-left: 9px;
}
.tab {
  width: 239px;
  height: 34px;
  border-radius: 8px 8px 0 0;
  background: #f1f2f4;
}
.page {
  display: flex;
  flex-direction: column;
  padding-top: 68px;
  padding-right: 2px;
}
.page-band {
  height: 34px;
  width: 200px;
  background: #15588a;
}
.page-drawing {
  flex: 1;
  width: 100%;
}
.page-note {
  height: 44px;
  padding: 14px 0 0 729px;
  border: 1px solid #bcc8ce;
  background: #e1ecf4;
  color: #2a6f9e;
  font-size: 13px;
  line-height: 16px;
}
.page-scroll {
  display: flex;
  flex-direction: column;
  align-items: center;
  padding-top: 567px;
  background: #f1f1f1;
}
.page-thumb {
  width: 13px;
  height: 70px;
  background: #c1c1c1;
}
.page-scroll span {
  margin-top: auto;
  padding-bottom: 4px;
  font-size: 8px;
  line-height: 12px;
  color: #444;
}

/* windows */
.window {
  position: absolute;
  display: flex;
  flex-direction: column;
  border: 1px solid #999;
  background: #f0f0f0;
  box-shadow: 0 4px 14px 2px rgba(0, 0, 0, 0.35);
}
.assign {
  top: 6px;
  left: 8px;
  right: 6px;
}
.viewer {
  top: 368px;
  left: 5px;
  right: 634px;
  bottom: 0;
  border-bottom: none;
}
.viewer3d {
  top: 369px;
  left: 737px;
  right: 27px;
  bottom: 0;
  border-color: #6b6b6b;
  border-bottom: none;
}
.title-bar {
  display: flex;
  align-items: center;
  height: 30px;
  padding-left: 8px;
  background: #fff;
}
.title-bar h1 {
  flex: 1;
  margin: 0 0 0 5px;
  font-size: 12px;
  font-weight: 400;
}
.title-bar button {
  width: 46px;
  height: 30px;
}
.title-bar button svg {
  display: block;
  width: 12px;
  height: 12px;
  margin: 0 auto;
}
.inactive .title-bar {
  color: #999;
}
.app-icon {
  width: 16px;
  height: 16px;
}
.menu-bar {
  display: flex;
  gap: 14px;
  height: 19px;
  padding-left: 7px;
  background: #fff;
  line-height: 19px;
}
.inactive .menu-bar {
  color: #6d6d6d;
}
.toolbar {
  display: flex;
  align-items: center;
  gap: 2px;
  height: 38px;
  padding-left: 5px;
  border-bottom: 1px solid #a0a0a0;
}
.toolbar button,
.side-tools button {
  width: 32px;
  height: 32px;
  flex: none;
}
.toolbar button svg,
.side-tools button svg {
  display: block;
  width: 26px;
  height: 26px;
  margin: 0 auto;
}
.toolbar .on,
.side-tools .on {
  border: 1px solid #0078d7;
  background: #b3d7f5;
}
.toolbar .sep {
  width: 1px;
  height: 24px;
  margin: 0 3px;
  background: #a8a8a8;
}
.filter-label {
  width: 107px;
  padding-left: 15px;
  font-weight: 700;
  white-space: nowrap;
}
.filter-input {
  width: 110px;
  height: 23px;
  border: 1px solid #7a7a7a;
  background: #fff;
}

/* assign footprints panels */
.panels {
  display: flex;
  gap: 4px;
  height: 289px;
  background: #dcdcdc;
}
.panel {
  display: flex;
  flex-direction: column;
  min-width: 0;
  border-right: 1px solid #a0a0a0;
  background: #fff;
}
.libraries {
  width: 274px;
}
.assignments {
  flex: 1;
  border-left: 1px solid #a0a0a0;
}
.filtered {
  width: 405px;
  border-left: 1px solid #a0a0a0;
}
.panel h2 {
  margin: 0;
  padding-left: 4px;
  height: 18px;
  background: linear-gradient(#b4b4b4, #dadada);
  font-family: "Liberation Sans", sans-serif;
  font-size: 11px;
  font-weight: 400;
  line-height: 15px;
}
.panel-body {
  flex: 1;
  display: flex;
  min-height: 0;
  overflow: hidden;
  font-family: "Liberation Mono", monospace;
  font-size: 12px;
  line-height: 19px;
}
.rows {
  flex: 1;
  min-width: 0;
  margin: 0;
  padding: 0 16px 0 5px;
  overflow: hidden;
  list-style: none;
  white-space: nowrap;
}
.rows li {
  height: 19px;
  padding-left: 2px;
}
.selected {
  background: #f0f0f0;
}
.rows.numbered {
  padding: 0;
}
.numbered li {
  padding: 0;
}
.numbered span {
  display: inline-block;
  width: 27px;
  margin-right: 7px;
  text-align: right;
}
.assignments table {
  align-self: flex-start;
  width: 551px;
  margin-left: 6px;
  border-collapse: collapse;
  table-layout: fixed;
  white-space: pre;
}
.assignments td {
  height: 19px;
  padding: 0;
}
.assignments td:nth-child(1) {
  width: 22px;
  text-align: right;
}
.assignments td:nth-child(2) {
  width: 63px;
  text-align: right;
}
.assignments td:nth-child(3) {
  width: 14px;
  text-align: right;
}
.assignments td:nth-child(4) {
  width: 119px;
  text-align: right;
}
.assignments td:nth-child(5) {
  width: 14px;
  text-align: right;
}
.assignments td:nth-child(6) {
  padding-left: 7px;
}
.v-scroll {
  flex: none;
  display: flex;
  flex-direction: column;
  align-items: center;
  width: 15px;
  background: #f0f0f0;
}
.v-scroll svg,
.h-scroll svg {
  flex: none;
  width: 10px;
  height: 17px;
}
.v-scroll .thumb {
  width: 15px;
  height: 67px;
  background: #cdcdcd;
}
.v-scroll .thumb.small {
  height: 25px;
}
.v-scroll .end {
  margin-top: auto;
}
.h-track {
  height: 17px;
  background: #f0f0f0;
}
.status {
  height: 47px;
  border-top: 1px solid #a0a0a0;
  border-bottom: 1px solid #a0a0a0;
}
.dialog-buttons {
  display: flex;
  justify-content: flex-end;
  padding: 7px 11px 6px;
}
.dialog-buttons button {
  width: 86px;
  height: 24px;
  border: 1px solid #adadad;
  background: #e1e1e1;
}

/* footprint viewer */
.viewer .toolbar {
  height: 37px;
  border-bottom: 1px solid #fff;
}
.choice {
  position: relative;
}
.choice select {
  display: block;
  width: 100%;
  height: 23px;
  padding: 0 4px;
  appearance: none;
  border: 1px solid #adadad;
  border-radius: 0;
  background: #e1e1e1;
  font: inherit;
  color: #000;
}
.choice svg {
  position: absolute;
  right: 4px;
  top: 7px;
  width: 10px;
  height: 10px;
  pointer-events: none;
}
.grid-choice {
  width: 184px;
}
.zoom-choice {
  width: 102px;
}
.viewer-body {
  flex: 1;
  display: flex;
  min-height: 0;
}
.side-tools {
  flex: none;
  display: flex;
  flex-direction: column;
  align-items: center;
  gap: 2px;
  width: 37px;
  padding-top: 4px;
  padding-right: 1px;
}
.side-tools .sep {
  width: 24px;
  height: 1px;
  margin: 3px 0;
  background: #b0b0b0;
}
.canvas-area {
  flex: 1;
  display: grid;
  grid-template-columns: 1fr 18px;
  grid-template-rows: 1fr 17px;
}
.canvas {
  width: 100%;
  height: 100%;
  background: #000;
  border-bottom: 1px solid #fff;
}
.canvas-area .v-scroll {
  width: 15px;
  margin-left: 1px;
}
.canvas-area .v-scroll .thumb {
  height: 17px;
  margin-top: 101px;
}
.h-scroll {
  display: flex;
  align-items: center;
  padding: 0 4px 0 3px;
}
.h-scroll .thumb {
  width: 17px;
  height: 15px;
  margin-left: 314px;
  background: #cdcdcd;
}
.h-scroll .end {
  margin-left: auto;
}
.viewer-status {
  height: 23px;
  border-top: 1px solid #fff;
}

/* 3d viewer */
.scene {
  position: relative;
  flex: 1;
  display: flex;
  align-items: center;
  justify-content: center;
  padding-top: 8px;
  background: linear-gradient(#cccce6, #666680);
}
.board {
  width: 38px;
  height: 38px;
  background: #26422f;
}
.axes {
  position: absolute;
  left: 14px;
  bottom: 6px;
  width: 24px;
  height: 24px;
}

/* red marks over everything */
.marks {
  position: absolute;
  inset: 0;
  width: 100%;
  height: 100%;
  pointer-events: none;
  fill: none;
  stroke: #ed1c24;
}
.marks text {
  fill: #ed1c24;
  stroke: none;
  font-family: Lato, sans-serif;
  font-size: 24px;
  font-weight: 700;
}

/* taskbar */
.taskbar {
  display: flex;
  height: 40px;
  padding-left: 1px;
  background: #3a3a3b;
  color: #fff;
}
.task {
  display: flex;
  align-items: center;
  justify-content: center;
  width: 49px;
  position: relative;
}
.task svg {
  width: 24px;
  height: 24px;
}
.task.open::after {
  content: "";
  position: absolute;
  left: 5px;
  right: 4px;
  bottom: 0;
  height: 2px;
  background: #76b9ed;
}
.task.active {
  background: #5f5f60;
}
.task.active::after {
  left: 0;
  right: 0;
}
.tray {
  display: flex;
  align-items: center;
  margin-left: auto;
}
.tray svg {
  width: 24px;
  height: 24px;
}
.clock {
  display: flex;
  flex-direction: column;
  align-items: center;
  justify-content: center;
  width: 66px;
  line-height: 18px;
}
.notices {
  width: 48px;
}
.notices svg {
  display: block;
  width: 28px;
  height: 28px;
  margin: 0 auto;
}
.show-desktop {
  width: 4px;
  border-left: 1px solid #777;
}
```
